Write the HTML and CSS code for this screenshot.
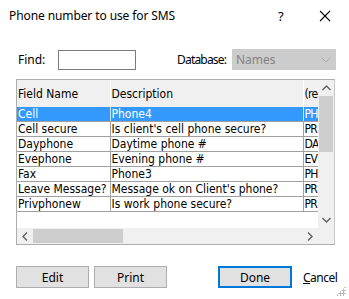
FILE: index.html
```html
<!DOCTYPE html>
<html lang="en">
<head>
    <meta charset="UTF-8">
    <title>Phone number to use for SMS</title>
    <link rel="stylesheet" href="styles.css">
</head>
<body>
    <div class="dialog">
        <div class="titlebar">
            <span class="title">Phone number to use for SMS</span>
            <span class="help">?</span>
            <span class="close">
                <svg width="12" height="12" viewBox="0 0 12 12"><path d="M1 1 L11 11 M11 1 L1 11" stroke="#000" stroke-width="1.1"/></svg>
            </span>
        </div>

        <div class="find-row">
            <label class="find-label">Find:</label>
            <div class="find-input"></div>
            <label class="db-label">Database:</label>
            <div class="db-select">
                <span>Names</span>
                <svg width="10" height="6" viewBox="0 0 10 6"><path d="M0.5 0.5 L5 5 L9.5 0.5" fill="none" stroke="#a8a8a8" stroke-width="1"/></svg>
            </div>
        </div>

        <div class="listbox">
            <div class="list-view">
                <table class="grid">
                    <colgroup>
                        <col style="width:93px">
                        <col style="width:193px">
                        <col style="width:30px">
                    </colgroup>
                    <thead>
                        <tr><th>Field Name</th><th>Description</th><th class="rec">(re</th></tr>
                    </thead>
                    <tbody>
                        <tr class="selected"><td>Cell</td><td>Phone4</td><td class="rec">PH</td></tr>
                        <tr><td>Cell secure</td><td>Is client's cell phone secure?</td><td class="rec">PR</td></tr>
                        <tr><td>Dayphone</td><td>Daytime phone #</td><td class="rec">DA</td></tr>
                        <tr><td>Evephone</td><td>Evening phone #</td><td class="rec">EV</td></tr>
                        <tr><td>Fax</td><td>Phone3</td><td class="rec">PH</td></tr>
                        <tr><td>Leave Message?</td><td>Message ok on Client's phone?</td><td class="rec">PR</td></tr>
                        <tr><td>Privphonew</td><td>Is work phone secure?</td><td class="rec">PR</td></tr>
                    </tbody>
                </table>
            </div>
            <div class="vscroll">
                <span class="arrow">
                    <svg width="9" height="6" viewBox="0 0 9 6"><path d="M0.5 5 L4.5 1 L8.5 5" fill="none" stroke="#606060" stroke-width="1.4"/></svg>
                </span>
                <span class="vthumb"></span>
                <span class="vtrack"></span>
                <span class="arrow">
                    <svg width="9" height="6" viewBox="0 0 9 6"><path d="M0.5 1 L4.5 5 L8.5 1" fill="none" stroke="#606060" stroke-width="1.4"/></svg>
                </span>
            </div>
            <div class="hscroll">
                <span class="arrow">
                    <svg width="6" height="9" viewBox="0 0 6 9"><path d="M5 0.5 L1 4.5 L5 8.5" fill="none" stroke="#606060" stroke-width="1.4"/></svg>
                </span>
                <span class="hthumb"></span>
                <span class="htrack"></span>
                <span class="arrow">
                    <svg width="6" height="9" viewBox="0 0 6 9"><path d="M1 0.5 L5 4.5 L1 8.5" fill="none" stroke="#606060" stroke-width="1.4"/></svg>
                </span>
            </div>
            <div class="corner"></div>
        </div>

        <div class="buttons">
            <button class="btn">Edit</button>
            <button class="btn btn-print">Print</button>
            <button class="btn btn-default">Done</button>
            <span class="cancel"><u>C</u>ancel</span>
        </div>
        <div class="grip"></div>
    </div>
</body>
</html>
```

FILE: styles.css
```css
body {
    margin: 0;
    background-color: #fff;
    font-family: "Noto Sans", "Open Sans", sans-serif;
    font-size: 12px;
    color: #000;
}

.dialog {
    width: 349px;
    height: 299px;
    position: relative;
    overflow: hidden;
}

/* Title bar */
.titlebar {
    display: flex;
    align-items: center;
    height: 31px;
    padding-left: 9px;
}

.title {
    flex: 1;
    font-size: 12px;
    letter-spacing: -0.1px;
}

.help {
    width: 20px;
    font-size: 13px;
    margin-right: 21px;
}

.close {
    display: flex;
    margin-right: 18px;
}

/* Find row */
.find-row {
    display: flex;
    align-items: center;
    margin-top: 18px;
    height: 21px;
}

.find-label {
    margin-left: 18px;
    width: 40px;
}

.find-input {
    width: 76px;
    height: 18px;
    border: 1px solid #7a7a7a;
    background-color: #fff;
}

.db-label {
    margin-left: 41px;
    width: 55px;
    letter-spacing: -0.8px;
}

.db-select {
    display: flex;
    align-items: center;
    justify-content: space-between;
    width: 95px;
    height: 21px;
    padding: 0 5px 0 4px;
    background-color: #cccccc;
    color: #838383;
}

/* List */
.listbox {
    display: grid;
    grid-template-columns: 301px 16px;
    grid-template-rows: 148px 16px;
    width: 317px;
    margin: 9px 0 0 16px;
    border: 1px solid #adadad;
    border-right-color: #c8c8c8;
}

.list-view {
    overflow: hidden;
    background-color: #fff;
}

.grid {
    table-layout: fixed;
    border-collapse: collapse;
    font-family: "DejaVu Sans Condensed", "DejaVu Sans", sans-serif;
    font-size: 12px;
    width: 316px;
    white-space: nowrap;
}

.grid th {
    height: 27px;
    background-color: #f0f0f0;
    font-weight: normal;
    text-align: left;
    padding: 0 0 0 1px;
    border-right: 1px solid #fff;
    overflow: hidden;
}

.grid td {
    height: 14px;
    line-height: 14px;
    padding: 0 0 0 1px;
    border-right: 1px solid #a0a0a0;
    border-bottom: 1px solid #a0a0a0;
    overflow: hidden;
}

.grid .rec {
    letter-spacing: -0.7px;
}

.grid tr.selected td {
    background-color: #3399ff;
    color: #fff;
    border-right-color: #cfe4fb;
}

.vscroll {
    display: flex;
    flex-direction: column;
    background-color: #f0f0f0;
}

.hscroll {
    display: flex;
    background-color: #f0f0f0;
}

.arrow {
    display: flex;
    align-items: center;
    justify-content: center;
    width: 16px;
    height: 16px;
    flex-shrink: 0;
}

.vthumb {
    height: 56px;
    margin: 0 1px;
    background-color: #cdcdcd;
}

.vtrack,
.htrack {
    flex: 1;
}

.hthumb {
    width: 90px;
    margin: 1px 0;
    background-color: #cdcdcd;
}

.corner {
    background-color: #f0f0f0;
}

/* Buttons */
.buttons {
    display: flex;
    align-items: center;
    margin: 21px 0 0 16px;
}

.btn {
    width: 73px;
    height: 22px;
    padding: 0;
    font-family: "Noto Sans", "Open Sans", sans-serif;
    font-size: 12px;
    color: #000;
    background-color: #e1e1e1;
    border: 1px solid #adadad;
    border-radius: 0;
}

.btn-print {
    margin-left: 5px;
}

.btn-default {
    margin-left: 51px;
    width: 74px;
    border: 2px solid #0078d7;
}

.cancel {
    margin-left: 11px;
    letter-spacing: -0.5px;
}

.grip {
    position: absolute;
    right: 3px;
    bottom: 3px;
    width: 10px;
    height: 10px;
    background-image: radial-gradient(circle, #b8b8b8 1px, transparent 1.2px);
    background-size: 3px 3px;
    clip-path: polygon(100% 0, 100% 100%, 0 100%);
}
```
